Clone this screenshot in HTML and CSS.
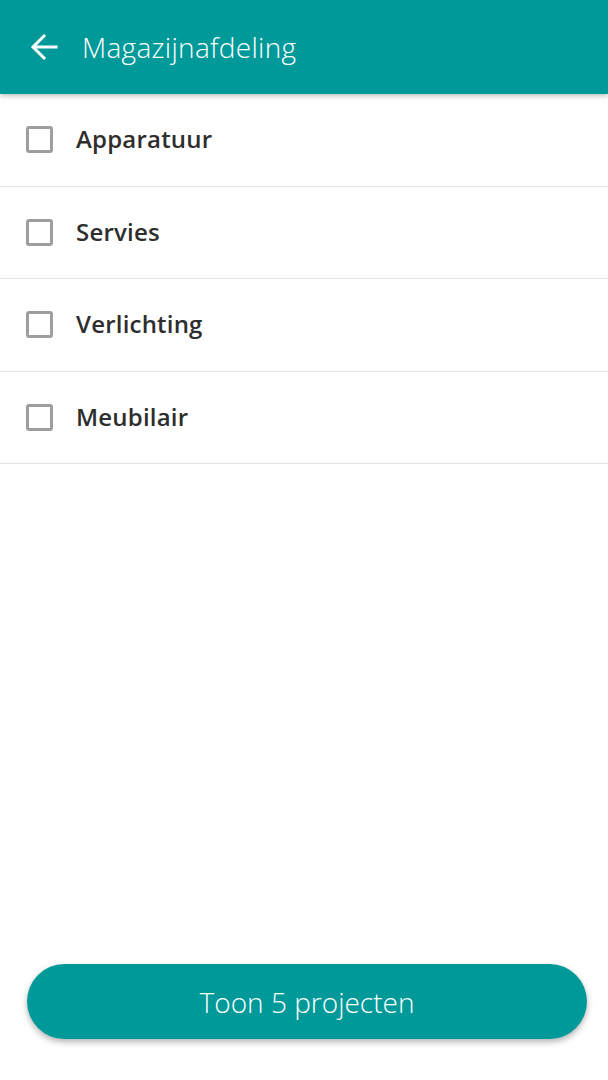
FILE: index.html
```html
<!DOCTYPE html>
<html lang="nl">
<head>
    <meta charset="UTF-8">
    <meta name="viewport" content="width=device-width, initial-scale=1.0">
    <title>Magazijnafdeling</title>
    <link rel="stylesheet" href="styles.css">
</head>
<body>
    <div class="app-bar">
        <svg class="back" width="28" height="28" viewBox="0 0 28 28">
            <path d="M26 14H4M14 3L3 14l11 11" fill="none" stroke="#fff" stroke-width="3" stroke-linecap="square"/>
        </svg>
        <div class="title">Magazijnafdeling</div>
    </div>
    <div class="list">
        <label class="row"><span class="box"></span><span class="label">Apparatuur</span></label>
        <label class="row"><span class="box"></span><span class="label">Servies</span></label>
        <label class="row"><span class="box"></span><span class="label">Verlichting</span></label>
        <label class="row"><span class="box"></span><span class="label">Meubilair</span></label>
    </div>
    <div class="footer">
        <div class="button">Toon 5 projecten</div>
    </div>
</body>
</html>
```

FILE: styles.css
```css
body {
    margin: 0;
    height: 100vh;
    display: flex;
    flex-direction: column;
    background-color: white;
    font-family: "Open Sans", sans-serif;
}
.app-bar {
    height: 94px;
    flex-shrink: 0;
    display: flex;
    align-items: center;
    padding-left: 30px;
    background-color: #009999;
    box-shadow: 0 2px 5px rgba(0, 0, 0, 0.25);
    position: relative;
    z-index: 1;
}
.back {
    display: block;
}
.title {
    margin-left: 24px;
    color: white;
    font-size: 28px;
    font-weight: 300;
    letter-spacing: 0.3px;
}
.list {
    display: flex;
    flex-direction: column;
}
.row {
    height: 91.6px;
    display: flex;
    align-items: center;
    padding-left: 26px;
    border-bottom: 1px solid #e2e2e2;
}
.box {
    width: 21px;
    height: 21px;
    border: 3px solid #9e9e9e;
    border-radius: 3px;
}
.label {
    margin-left: 23px;
    font-size: 24px;
    font-weight: 600;
    color: #2e2e2e;
    letter-spacing: 0.2px;
    margin-top: -2px;
}
.footer {
    margin-top: auto;
    padding: 0 21px 41px 27px;
}
.button {
    height: 75px;
    border-radius: 38px;
    background-color: #009999;
    color: white;
    display: flex;
    align-items: center;
    justify-content: center;
    font-size: 28px;
    font-weight: 300;
    box-shadow: 0 3px 6px rgba(0, 0, 0, 0.3);
}
```
